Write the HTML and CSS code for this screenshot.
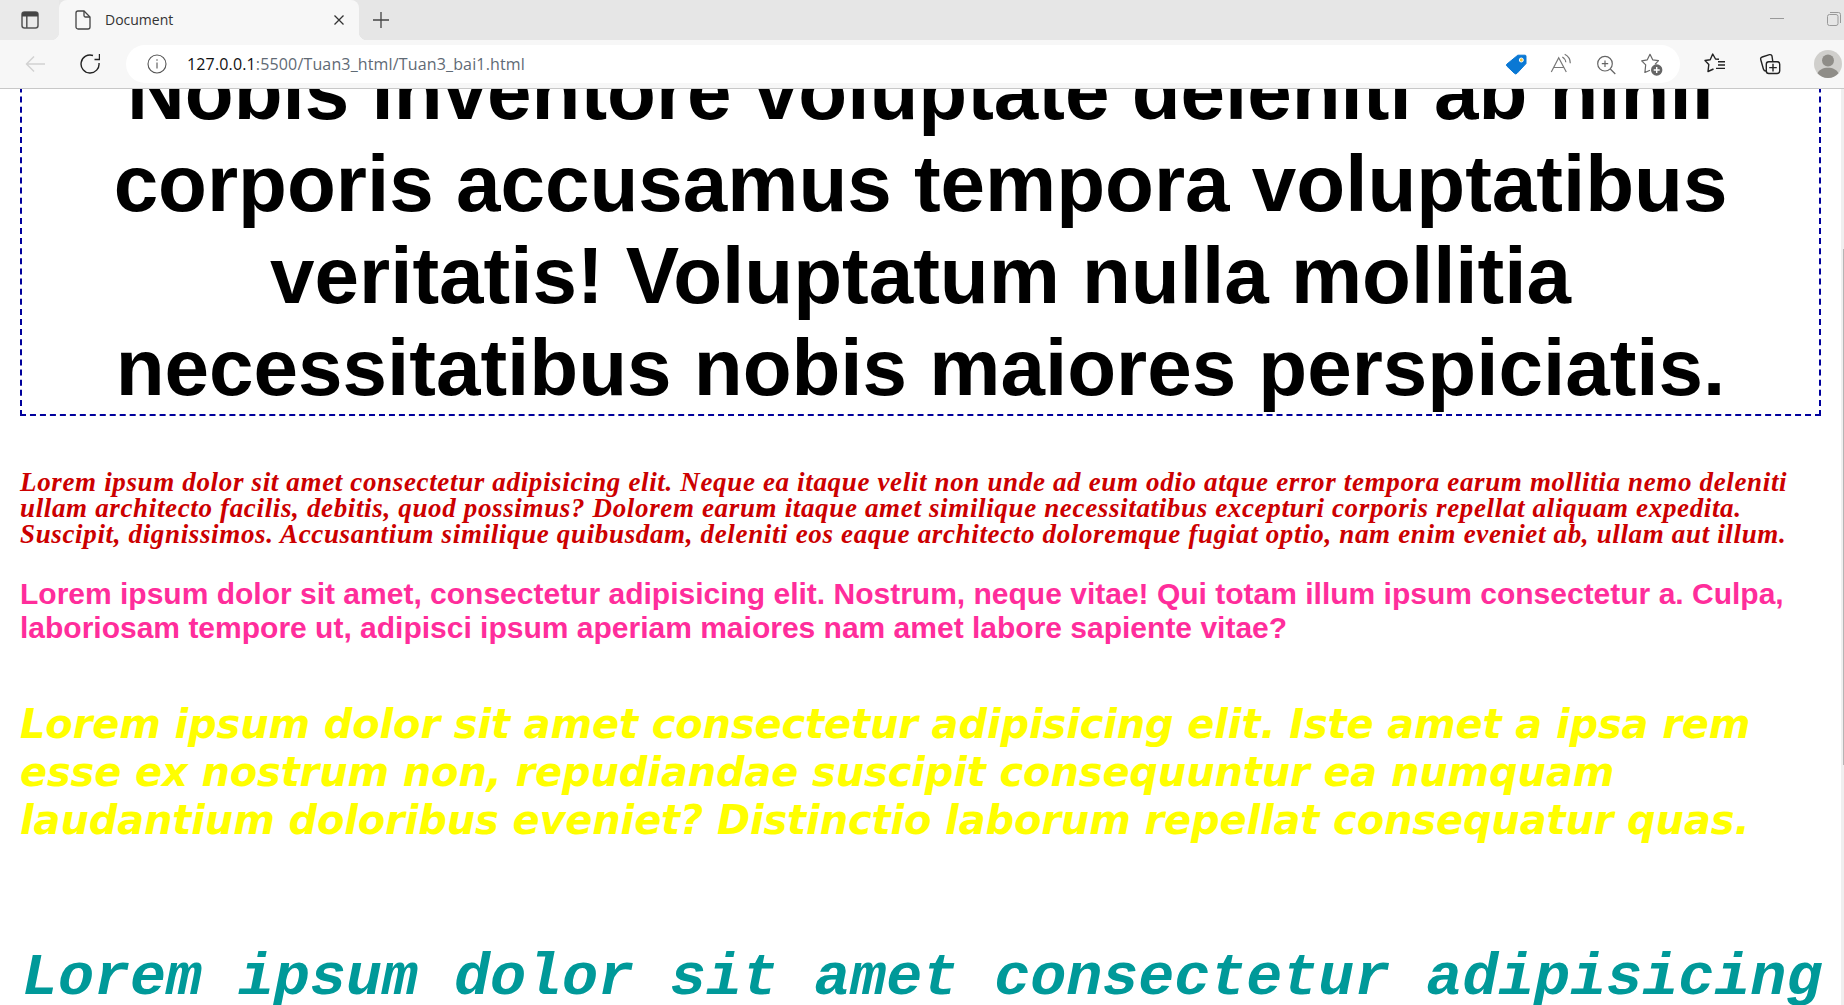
FILE: index.html
```html
<!DOCTYPE html>
<html lang="en">

<head>
    <meta charset="UTF-8">
    <meta name="viewport" content="width=device-width, initial-scale=1.0">
    <title>Document</title>
    <link rel="stylesheet" href="styles.css">
</head>

<body>
    <div class="tabstrip">
        <button class="strip-btn tabs-btn">
            <svg width="18" height="18" viewBox="0 0 18 18" fill="none" stroke="#555" stroke-width="1.5">
                <rect x="1" y="1" width="16" height="16" rx="2.5"/>
                <path d="M5.800 5v12"/>
                <path d="M3.500 1h11A2.500 2.500 0 0 1 17 3.500V5.500H1V3.500A2.500 2.500 0 0 1 3.500 1z" fill="#444" stroke="none"/>
            </svg>
        </button>
        <div class="tab">
            <svg class="tab-icon" width="16" height="20" viewBox="0 0 16 20" fill="none" stroke="#444" stroke-width="1.3">
                <path d="M1 3a2 2 0 0 1 2-2h6l6 6v10a2 2 0 0 1-2 2H3a2 2 0 0 1-2-2z"/>
                <path d="M9 1v4.500A1.500 1.500 0 0 0 10.500 7H15"/>
            </svg>
            <span class="tab-title">Document</span>
            <svg class="tab-close" width="12" height="12" viewBox="0 0 12 12" stroke="#333" stroke-width="1.3">
                <path d="M1.500 1.500l9 9M10.500 1.500l-9 9"/>
            </svg>
        </div>
        <button class="strip-btn new-tab">
            <svg width="16" height="16" viewBox="0 0 16 16" stroke="#444" stroke-width="1.3">
                <path d="M8 0v16M0 8h16"/>
            </svg>
        </button>
        <div class="window-btns">
            <svg width="14" height="14" viewBox="0 0 14 14" stroke="#999" stroke-width="1">
                <path d="M0 6.500h14"/>
            </svg>
            <svg width="14" height="14" viewBox="0 0 14 14" fill="none" stroke="#999" stroke-width="1">
                <rect x=".5" y="2.500" width="10.500" height="11" rx="2"/>
                <path d="M3 .5h8.500a2 2 0 0 1 2 2V11"/>
            </svg>
        </div>
    </div>

    <div class="toolbar">
        <button class="nav-btn back">
            <svg width="20" height="20" viewBox="0 0 20 20" fill="none" stroke="#d2d2d2" stroke-width="1.4">
                <path d="M20 10H1.500M9 2.500L1.500 10 9 17.500"/>
            </svg>
        </button>
        <button class="nav-btn reload">
            <svg width="20" height="20" viewBox="0 0 20 20" fill="none" stroke="#222" stroke-width="1.400">
                <path d="M19 9A9 9 0 1 1 13 1.500"/>
                <path d="M14.500 5.500h5V0"/>
            </svg>
        </button>
        <div class="address">
            <svg class="info-icon" width="20" height="20" viewBox="0 0 20 20" fill="none" stroke="#555" stroke-width="1.100">
                <circle cx="10" cy="10" r="9"/>
                <path d="M10 8.500v6M10 5.200v1.500"/>
            </svg>
            <span class="url"><b>127.0.0.1</b>:5500/Tuan3_html/Tuan3_bai1.html</span>
            <div class="address-icons">
                <svg width="22" height="22" viewBox="0 0 22 22">
                    <path d="M12.800 2.200H20a1 1 0 0 1 1 1v7.400L12 20.300a1.800 1.800 0 0 1-2.600 0L2 13.200a1.500 1.500 0 0 1 0-2.200z" fill="#0a78d4" stroke="#0a78d4" stroke-linejoin="round"/>
                    <circle cx="16.300" cy="7" r="2" fill="#f3c53c" stroke="#fff" stroke-width="1"/>
                </svg>
                <svg width="22" height="22" viewBox="0 0 22 22" fill="none" stroke="#777" stroke-width="1.200">
                    <path d="M1.300 19L8.700 4.700 16.300 19M4 14.500h9.500"/>
                    <path d="M12.300 4a7 7 0 0 1 3.500 5.300M14.700 1.300a10 10 0 0 1 5.600 9"/>
                </svg>
                <svg width="22" height="22" viewBox="0 0 22 22" fill="none" stroke="#666" stroke-width="1.200">
                    <circle cx="10" cy="10.700" r="7.300"/>
                    <path d="M15.300 16l5 5M10 7.500v6.400M6.800 10.700h6.400"/>
                </svg>
                <svg width="24" height="24" viewBox="0 0 24 24" fill="none" stroke="#666" stroke-width="1.200" stroke-linejoin="round">
                    <path d="M15 12.300l3.500-3.600-5.800-.9L10 2.300 7.300 7.800 1.700 8.800l4 4-.8 7.700 5.100-2.300"/>
                    <circle cx="16.700" cy="18" r="5.700" fill="#666" stroke="none"/>
                    <path d="M16.700 15v6M13.700 18h6" stroke="#fff" stroke-width="1.400"/>
                </svg>
            </div>
        </div>
        <div class="toolbar-icons">
            <svg width="22" height="22" viewBox="0 0 22 22" fill="none" stroke="#222" stroke-width="1.400" stroke-linejoin="round">
                <path d="M15 6.300L11.500 6 8.700 1 6.200 6.700 1 7.500l3.800 4-.8 7 5.500-2.500"/>
                <path d="M14 8.800h7M14 12h7M12 15.400h9"/>
            </svg>
            <svg width="22" height="22" viewBox="0 0 22 22" fill="none" stroke="#222" stroke-width="1.400">
                <rect x="7.300" y="8.700" width="13.400" height="11.800" rx="2.500"/>
                <path d="M14 10.800v7.600M10.200 14.600h7.600"/>
                <path d="M7 18c-1.500 0-2.300-1-2.600-2L1.700 6.500A2 2 0 0 1 3.200 4L10.500 1.700A2 2 0 0 1 13 3.200L13.800 8.500"/>
            </svg>
            <svg class="avatar" width="28" height="28" viewBox="0 0 28 28">
                <circle cx="14" cy="14" r="14" fill="#d0cfcc"/>
                <circle cx="14" cy="10.500" r="6" fill="#8f8d88"/>
                <path d="M3.500 23.300c1.800-3.800 5.500-5.600 10.500-5.600s8.700 1.800 10.500 5.600A14 14 0 0 1 14 28 14 14 0 0 1 3.500 23.300z" fill="#8f8d88"/>
            </svg>
        </div>
    </div>

    <div class="viewport">
        <main class="page">
            <h1 class="headline">Nobis inventore voluptate deleniti ab nihil<br>corporis accusamus tempora voluptatibus<br>veritatis! Voluptatum nulla mollitia<br>necessitatibus nobis maiores perspiciatis.</h1>

            <p class="text-red">Lorem ipsum dolor sit amet consectetur adipisicing elit. Neque ea itaque velit non unde ad eum odio atque error tempora earum mollitia nemo deleniti<br>ullam architecto facilis, debitis, quod possimus? Dolorem earum itaque amet similique necessitatibus excepturi corporis repellat aliquam expedita.<br>Suscipit, dignissimos. Accusantium similique quibusdam, deleniti eos eaque architecto doloremque fugiat optio, nam enim eveniet ab, ullam aut illum.</p>

            <p class="text-pink">Lorem ipsum dolor sit amet, consectetur adipisicing elit. Nostrum, neque vitae! Qui totam illum ipsum consectetur a. Culpa,<br>laboriosam tempore ut, adipisci ipsum aperiam maiores nam amet labore sapiente vitae?</p>

            <p class="text-yellow">Lorem ipsum dolor sit amet consectetur adipisicing elit. Iste amet a ipsa rem<br>esse ex nostrum non, repudiandae suscipit consequuntur ea numquam<br>laudantium doloribus eveniet? Distinctio laborum repellat consequatur quas.</p>

            <p class="text-teal">Lorem ipsum dolor sit amet consectetur adipisicing</p>
        </main>
        <div class="scrollbar"><div class="thumb"></div></div>
    </div>
</body>

</html>
```

FILE: styles.css
```css
html,
body {
    height: 100%;
}

body {
    margin: 0;
    display: flex;
    flex-direction: column;
    overflow: hidden;
    background: #fff;
    font-family: 'Liberation Sans', Arial, sans-serif;
}

button {
    border: 0;
    padding: 0;
    background: none;
    display: flex;
    align-items: center;
    justify-content: center;
}

/* tab strip */
.tabstrip {
    height: 40px;
    flex: none;
    display: flex;
    background: #e6e6e6;
}

.strip-btn {
    height: 40px;
}

.tabs-btn {
    width: 59px;
    background: #eaeaea;
}

.tab {
    position: relative;
    width: 300px;
    height: 40px;
    box-sizing: border-box;
    padding: 0 14px 0 16px;
    display: flex;
    align-items: center;
    background: #f7f7f7;
    border-radius: 8px 8px 0 0;
}

.tab::before,
.tab::after {
    content: '';
    position: absolute;
    bottom: 0;
    width: 8px;
    height: 8px;
}

.tab::before {
    left: -8px;
    background: radial-gradient(circle at 0 0, transparent 8px, #f7f7f7 8.5px);
}

.tab::after {
    right: -8px;
    background: radial-gradient(circle at 100% 0, transparent 8px, #f7f7f7 8.5px);
}

.tab-title {
    flex: 1;
    margin-left: 14px;
    padding-bottom: 2px;
    font-family: 'Open Sans', sans-serif;
    font-size: 14px;
    color: #333;
}

.new-tab {
    width: 44px;
}

.window-btns {
    margin-left: auto;
    margin-right: 3px;
    height: 38px;
    display: flex;
    align-items: center;
    gap: 43px;
}

/* toolbar */
.toolbar {
    height: 49px;
    flex: none;
    box-sizing: border-box;
    border-bottom: 1px solid #c8c8c8;
    display: flex;
    align-items: center;
    background: #f7f7f7;
}

.nav-btn {
    height: 38px;
}

.back {
    margin-left: 5px;
    width: 60px;
}

.reload {
    width: 50px;
}

.address {
    width: 1554px;
    height: 38px;
    margin-left: 11px;
    box-sizing: border-box;
    padding: 0 16px 0 21px;
    display: flex;
    align-items: center;
    background: #fff;
    border-radius: 19px;
}

.url {
    margin-left: 20px;
    font-family: 'Open Sans', sans-serif;
    font-size: 16px;
    letter-spacing: 0.15px;
    color: #5f6a75;
}

.url b {
    font-weight: 400;
    color: #111;
}

.address-icons {
    margin-left: auto;
    display: flex;
    align-items: center;
    gap: 23px;
}

.toolbar-icons {
    flex: 1;
    display: flex;
    align-items: center;
    padding-left: 24px;
    gap: 33px;
}

/* page, scrolled part way down */
.viewport {
    flex: 1;
    min-height: 0;
    display: flex;
}

.page {
    flex: 1;
    min-width: 0;
    overflow: hidden;
    padding: 0 20px;
}

.scrollbar {
    width: 3px;
    flex: none;
    background: #efefef;
}

.thumb {
    width: 1px;
    height: 516px;
    margin: 160px 0 0 2px;
    background: #b5b5b5;
}

.headline {
    margin: -43px 0 0;
    border: 2px dashed #00009c;
    border-top: 0;
    font-size: 80px;
    line-height: 92px;
    text-align: center;
    color: #000;
}

p {
    margin: 0;
    white-space: nowrap;
}

.text-red {
    margin-top: 53px;
    font-family: 'Liberation Serif', Georgia, serif;
    font-size: 27px;
    line-height: 26px;
    letter-spacing: 0.65px;
    font-weight: bold;
    font-style: italic;
    color: #cc0000;
}

.text-pink {
    margin-top: 30px;
    font-size: 30px;
    line-height: 34px;
    font-weight: bold;
    color: #ff2d9b;
}

.text-yellow {
    margin-top: 55px;
    font-family: 'DejaVu Sans', Verdana, sans-serif;
    font-size: 40px;
    line-height: 48px;
    letter-spacing: -0.16px;
    font-weight: bold;
    font-style: italic;
    color: #ffff00;
}

.text-teal {
    margin: 100px 0 0 2px;
    font-family: 'Liberation Mono', 'Courier New', monospace;
    font-size: 60px;
    line-height: 68px;
    font-weight: bold;
    font-style: italic;
    color: #009999;
}
```
